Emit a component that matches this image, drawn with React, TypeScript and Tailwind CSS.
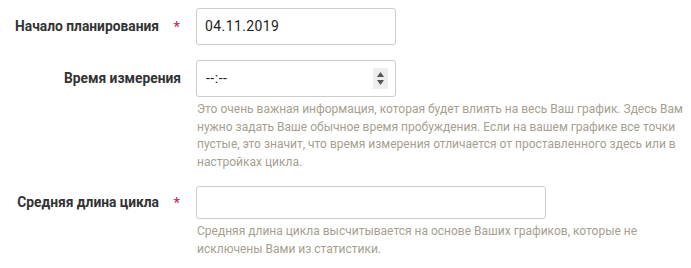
import React from "react";

const help1 = [
  "Это очень важная информация, которая будет влиять на весь Ваш график. Здесь Вам",
  "нужно задать Ваше обычное время пробуждения. Если на вашем графике все точки",
  "пустые, это значит, что время измерения отличается от проставленного здесь или в",
  "настройках цикла.",
];
const help2 = [
  "Средняя длина цикла высчитывается на основе Ваших графиков, которые не",
  "исключены Вами из статистики.",
];

function Label({ text, required }: { text: string; required?: boolean }) {
  return (
    <div className="w-[181px] shrink-0 flex justify-end items-center text-[13.8px] font-bold text-[#333] [font-family:Roboto,sans-serif]">
      <span>{text}</span>
      {required ? (
        <span className="w-[22px] text-right text-[#c7254e] font-normal text-[15px] leading-none pt-[2px] pr-[1px]">*</span>
      ) : null}
    </div>
  );
}

function Help({ lines }: { lines: string[] }) {
  return (
    <div className="mt-[4px] text-[12px] leading-[17.5px] text-[#a69f90] [font-family:Roboto,sans-serif] pl-[1px]">
      {lines.map((l, i) => (
        <div key={i} className="whitespace-nowrap">
          {l}
        </div>
      ))}
    </div>
  );
}

export default function App() {
  return (
    <div className="w-[691px] h-[268px] bg-white pt-[8px] [font-family:Roboto,sans-serif]">
      <div className="flex items-center gap-[15px]">
        <Label text="Начало планирования" required />
        <div className="w-[200px] h-[37px] border border-[#ccc] rounded-[3px] flex items-center pl-[8px] text-[14px] text-[#222] tracking-[0.4px]">
          04.11.2019
        </div>
      </div>
      <div className="flex gap-[15px] mt-[15px]">
        <div className="h-[37px] flex items-center">
          <Label text="Время измерения" />
        </div>
        <div>
          <div className="w-[200px] h-[37px] border border-[#ccc] rounded-[3px] flex items-center justify-between pl-[9px] pr-[7px] text-[14px] text-[#222]">
            <span className="tracking-[0.5px]">--:--</span>
            <div className="w-[15px] h-[21px] bg-[#eeeeee] flex flex-col items-center justify-center gap-[3px]">
              <svg width="7" height="5" viewBox="0 0 7 5"><path d="M3.5 0 L7 5 L0 5 Z" fill="#555" /></svg>
              <svg width="7" height="5" viewBox="0 0 7 5"><path d="M0 0 L7 0 L3.5 5 Z" fill="#555" /></svg>
            </div>
          </div>
          <Help lines={help1} />
        </div>
      </div>
      <div className="flex gap-[15px] mt-[15px]">
        <div className="h-[33px] flex items-center">
          <Label text="Средняя длина цикла" required />
        </div>
        <div>
          <div className="w-[350px] h-[33px] border border-[#ccc] rounded-[3px]" />
          <Help lines={help2} />
        </div>
      </div>
    </div>
  );
}
